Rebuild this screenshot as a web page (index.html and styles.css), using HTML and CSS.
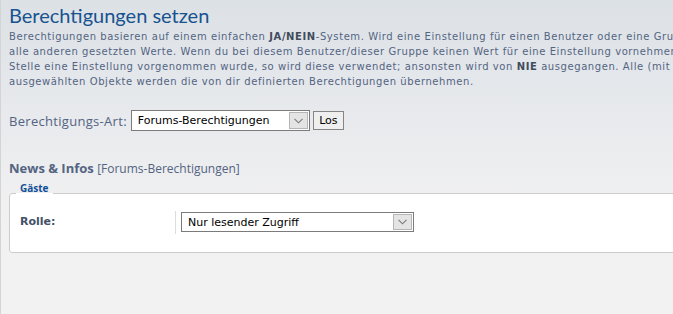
FILE: index.html
```html
<!DOCTYPE html>
<html lang="de">
<head>
<meta charset="utf-8">
<title>Berechtigungen setzen</title>
<link rel="stylesheet" href="styles.css">
</head>
<body>
<div class="page">
  <h1 class="title">Berechtigungen setzen</h1>
  <p class="intro">
    <span class="line">Berechtigungen basieren auf einem einfachen <strong>JA/NEIN</strong>-System. Wird eine Einstellung für einen Benutzer oder eine Gruppe auf <strong>NIE</strong> gesetzt, so überschreibt dies</span>
    <span class="line">alle anderen gesetzten Werte. Wenn du bei diesem Benutzer/dieser Gruppe keinen Wert für eine Einstellung vornehmen willst, wähle <strong>NEIN</strong>. Wenn an anderer</span>
    <span class="line">Stelle eine Einstellung vorgenommen wurde, so wird diese verwendet; ansonsten wird von <strong>NIE</strong> ausgegangen. Alle (mit einem Haken davor)</span>
    <span class="line">ausgewählten Objekte werden die von dir definierten Berechtigungen übernehmen.</span>
  </p>

  <form class="type-form">
    <label class="type-label">Berechtigungs-Art:</label>
    <div class="fake-select sel-type">
      <span class="sel-text">Forums-Berechtigungen</span>
      <span class="sel-btn"><svg width="9" height="6" viewBox="0 0 9 6"><path d="M0.5 0.8 L4.5 4.8 L8.5 0.8" fill="none" stroke="#7a7a7a" stroke-width="1.1"/></svg></span>
    </div>
    <span class="btn">Los</span>
  </form>

  <h3 class="forum-head">News &amp; Infos <span class="forum-sub">[Forums-Berechtigungen]</span></h3>

  <fieldset class="perm-set">
    <legend class="perm-legend">Gäste</legend>
    <dl class="perm-row">
      <dt class="perm-dt">Rolle:</dt>
      <dd class="perm-dd">
        <div class="fake-select sel-role">
          <span class="sel-text">Nur lesender Zugriff</span>
          <span class="sel-btn"><svg width="9" height="6" viewBox="0 0 9 6"><path d="M0.5 0.8 L4.5 4.8 L8.5 0.8" fill="none" stroke="#7a7a7a" stroke-width="1.1"/></svg></span>
        </div>
      </dd>
    </dl>
  </fieldset>
</div>
</body>
</html>
```

FILE: styles.css
```css
html, body {
  margin: 0;
  padding: 0;
  height: 100%;
  overflow: hidden;
}
body {
  background: linear-gradient(to bottom, #dce1e6 0px, #e8eaed 120px, #f0f0f1 200px, #f2f2f2 260px);
  font-family: "DejaVu Sans", Verdana, sans-serif;
}
.page {
  border-left: 1px solid #d4d4d4;
  min-height: 100%;
  padding-left: 8px;
  width: 1100px;
}
.title {
  margin: 0;
  padding-top: 3px;
  font-family: "Lato", "Open Sans", sans-serif;
  font-weight: normal;
  font-size: 20px;
  line-height: 24px;
  color: #17528f;
}
.intro {
  margin: 2px 0 0;
  font-size: 10px;
  line-height: 15px;
  color: #536482;
  letter-spacing: 0.58px;
}
.intro .line {
  display: block;
  white-space: nowrap;
}
.intro strong {
  font-weight: bold;
  color: #414b5c;
}
.type-form {
  display: flex;
  align-items: center;
  margin-top: 21px;
  height: 21px;
}
.type-label {
  font-family: "Open Sans", sans-serif;
  font-size: 13px;
  letter-spacing: 0.3px;
  color: #536482;
  margin-right: 4px;
}
.fake-select {
  display: flex;
  align-items: stretch;
  background: #fff;
  border: 1px solid #7b7b7b;
  box-sizing: border-box;
  font-size: 11px;
  color: #000;
}
.sel-text {
  flex: 1;
  padding-left: 6px;
  display: flex;
  align-items: center;
  white-space: nowrap;
}
.sel-btn {
  width: 17px;
  margin: 1px;
  background: #e4e4e4;
  border: 1px solid #b5b5b5;
  display: flex;
  align-items: center;
  justify-content: center;
}
.sel-type {
  width: 179px;
  height: 21px;
}
.btn {
  margin-left: 3px;
  width: 31px;
  height: 19px;
  box-sizing: border-box;
  border: 1px solid #858585;
  background: #efefef;
  font-size: 11px;
  display: flex;
  align-items: center;
  justify-content: center;
  color: #000;
}
.forum-head {
  margin: 28px 0 0;
  font-family: "Open Sans", sans-serif;
  font-size: 13px;
  font-weight: bold;
  line-height: 18px;
  color: #536482;
}
.forum-sub {
  font-weight: normal;
  font-size: 12px;
}
.perm-set {
  margin: 4px 0 0;
  padding: 0 0 18px;
  border: 1px solid #cccccc;
  border-radius: 3px 0 0 3px;
  background: #fff;
  min-width: 0;
}
.perm-legend {
  margin-left: 6px;
  padding: 0 4px 10px;
  font-family: "Open Sans", sans-serif;
  font-size: 10px;
  font-weight: bold;
  color: #115098;
  line-height: 12px;
}
.perm-row {
  display: flex;
  align-items: stretch;
  margin: 7px 0 0;
}
.perm-dt {
  width: 155px;
  padding-left: 10px;
  font-size: 11px;
  font-weight: bold;
  color: #425067;
  display: flex;
  align-items: center;
  padding-bottom: 2px;
}
.perm-dd {
  margin: 0;
  border-left: 1px solid #dcdcdc;
  padding: 1px 0 2px 5px;
}
.sel-role {
  width: 233px;
  height: 20px;
}
```
